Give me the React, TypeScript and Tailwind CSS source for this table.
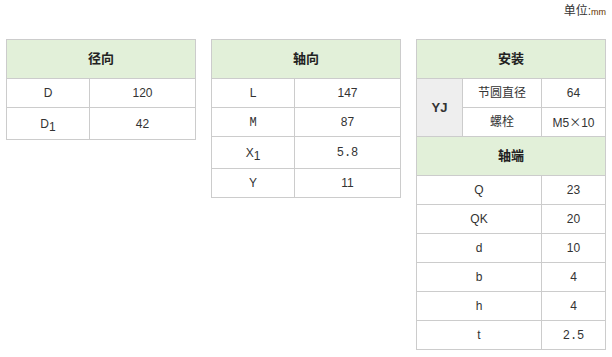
import type { ReactNode } from 'react';

const font = { fontFamily: '"Liberation Sans", Arial, "Noto Sans CJK SC", sans-serif' };

const cell = 'border border-[#cccccc] text-center align-middle p-0 h-[29px] text-[12px] text-[#333333]';
const head = 'border border-[#cccccc] text-center align-middle p-0 h-[39px] bg-[#e2f0d9] text-[13px] font-bold text-[#222222]';

function Sub({ base, sub }: { base: string; sub: string }) {
  return (
    <span className="inline-flex items-start">
      {base}
      <span className="text-[12px] relative top-[3px]">{sub}</span>
    </span>
  );
}

function Mono({ children }: { children: ReactNode }) {
  return <span style={{ fontFamily: '"Liberation Mono", monospace' }}>{children}</span>;
}

function SimpleTable({ title, rows }: { title: string; rows: [ReactNode, ReactNode, boolean?][] }) {
  return (
    <table className="w-[190px] border-collapse table-fixed">
      <colgroup>
        <col className="w-[83px]" />
        <col />
      </colgroup>
      <tbody>
        <tr>
          <td colSpan={2} className={head}>{title}</td>
        </tr>
        {rows.map(([k, v, tall], i) => (
          <tr key={i}>
            <td className={`${cell} ${tall ? 'h-[32px]' : ''}`}>{k}</td>
            <td className={`${cell} ${tall ? 'h-[32px]' : ''}`}>{v}</td>
          </tr>
        ))}
      </tbody>
    </table>
  );
}

const shaft: [string, ReactNode][] = [
  ['Q', '23'],
  ['QK', '20'],
  ['d', '10'],
  ['b', '4'],
  ['h', '4'],
  ['t', <Mono>2.5</Mono>],
];

export default function App() {
  return (
    <div className="w-[612px] h-[357px] bg-white px-[6px]" style={font}>
      <div className="pt-[4px] h-[39px] text-right text-[12px] leading-[14px] text-[#333333]">
        单位:<span className="text-[9px] text-[#663300]">mm</span>
      </div>
      <div className="flex items-start gap-[15px]">
        <SimpleTable
          title="径向"
          rows={[
            ['D', '120'],
            [<Sub base="D" sub="1" />, '42', true],
          ]}
        />
        <SimpleTable
          title="轴向"
          rows={[
            ['L', '147'],
            [<Mono>M</Mono>, '87'],
            [<Sub base="X" sub="1" />, <Mono>5.8</Mono>, true],
            ['Y', '11'],
          ]}
        />
        <table className="w-[190px] border-collapse table-fixed">
          <colgroup>
            <col className="w-[46px]" />
            <col className="w-[79px]" />
            <col />
          </colgroup>
          <tbody>
            <tr>
              <td colSpan={3} className={head}>安装</td>
            </tr>
            <tr>
              <td rowSpan={2} className={`${cell} bg-[#eeeeee] font-bold text-[13px] text-[#222222]`}>YJ</td>
              <td className={cell}>节圆直径</td>
              <td className={cell}>64</td>
            </tr>
            <tr>
              <td className={cell}>螺栓</td>
              <td className={cell}>
                M5<span style={{ fontFamily: '"Noto Sans CJK SC", sans-serif' }}>×</span>10
              </td>
            </tr>
            <tr>
              <td colSpan={3} className={head}>轴端</td>
            </tr>
            {shaft.map(([k, v]) => (
              <tr key={k}>
                <td colSpan={2} className={cell}>{k}</td>
                <td className={cell}>{v}</td>
              </tr>
            ))}
          </tbody>
        </table>
      </div>
    </div>
  );
}
